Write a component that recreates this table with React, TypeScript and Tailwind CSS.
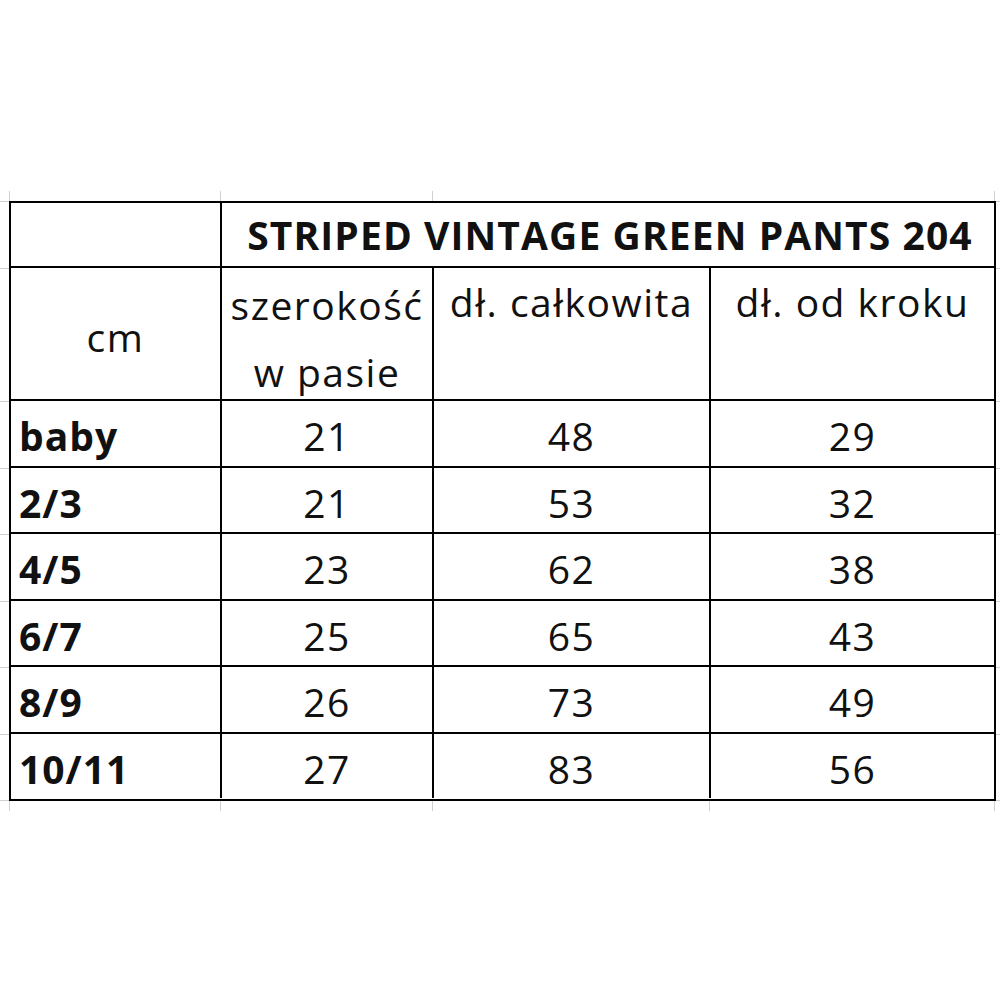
import React from "react";

const rows: [string, string, string, string][] = [
  ["baby", "21", "48", "29"],
  ["2/3", "21", "53", "32"],
  ["4/5", "23", "62", "38"],
  ["6/7", "25", "65", "43"],
  ["8/9", "26", "73", "49"],
  ["10/11", "27", "83", "56"],
];

const rowH = ["h-[67px]", "h-[66px]", "h-[67px]", "h-[66px]", "h-[67px]", "h-[66px]"];

export default function App() {
  const font = { fontFamily: '"Open Sans", "Noto Sans", sans-serif' };
  return (
    <div className="w-[1000px] h-[1000px] bg-white text-[#111]" style={font}>
      <div className="pt-[191px]">
        {/* top gridline stubs */}
        <div className="flex h-[10px]">
          <div className="w-[10px] border-r border-[#d0d0d0]" />
          <div className="w-[211px] border-r border-[#d0d0d0]" />
          <div className="w-[212px] border-r border-[#d0d0d0]" />
          <div className="w-[562px] border-r border-[#d0d0d0]" />
        </div>
        <div className="flex">
          {/* left stubs */}
          <div className="w-[9px] flex flex-col">
            <div className="h-[67px] border-t border-[#d0d0d0]" />
            <div className="h-[133px] border-t border-[#d0d0d0]" />
            {rowH.map((h, i) => (
              <div key={i} className={`${h} border-t border-[#d0d0d0]`} />
            ))}
            <div className="border-t border-[#d0d0d0]" />
          </div>
          {/* table */}
          <div className="w-[987px] border-2 border-black">
            <div className="flex h-[65px] border-b-2 border-black">
              <div className="w-[211px] border-r-2 border-black" />
              <div className="flex-1 flex items-center justify-center font-bold text-[39px] tracking-[1.1px] pl-[4px] pt-[2px]">
                STRIPED VINTAGE GREEN PANTS 204
              </div>
            </div>
            <div className="flex h-[133px] border-b-2 border-black text-[39px] tracking-[1.5px]">
              <div className="w-[211px] border-r-2 border-black flex items-center justify-center pt-[8px]">
                cm
              </div>
              <div className="w-[212px] border-r-2 border-black flex flex-col items-center leading-[67px] pt-[3px]">
                <span>szerokość</span>
                <span>w pasie</span>
              </div>
              <div className="w-[277px] border-r-2 border-black flex justify-center leading-[67px]">
                dł. całkowita
              </div>
              <div className="flex-1 flex justify-center leading-[67px]">
                dł. od kroku
              </div>
            </div>
            {rows.map((r, i) => (
              <div
                key={r[0]}
                className={`flex ${i === 5 ? "h-[64px]" : i % 2 === 0 ? "h-[67px] border-b-2" : "h-[66px] border-b-2"} border-black text-[39px] tracking-[1.5px]`}
              >
                <div className="w-[211px] border-r-2 border-black flex items-center pl-[8px] pt-[6px] font-bold tracking-[1px]">
                  {r[0]}
                </div>
                <div className="w-[212px] border-r-2 border-black flex items-center justify-center pt-[6px]">
                  {r[1]}
                </div>
                <div className="w-[277px] border-r-2 border-black flex items-center justify-center pt-[6px]">
                  {r[2]}
                </div>
                <div className="flex-1 flex items-center justify-center pt-[6px]">
                  {r[3]}
                </div>
              </div>
            ))}
          </div>
          {/* right stubs */}
          <div className="w-[4px] flex flex-col">
            <div className="h-[67px] border-t border-[#d0d0d0]" />
            <div className="h-[133px] border-t border-[#d0d0d0]" />
            {rowH.map((h, i) => (
              <div key={i} className={`${h} border-t border-[#d0d0d0]`} />
            ))}
            <div className="border-t border-[#d0d0d0]" />
          </div>
        </div>
        {/* bottom gridline stubs */}
        <div className="flex h-[10px]">
          <div className="w-[10px] border-r border-[#d0d0d0]" />
          <div className="w-[211px] border-r border-[#d0d0d0]" />
          <div className="w-[212px] border-r border-[#d0d0d0]" />
          <div className="w-[277px] border-r border-[#d0d0d0]" />
          <div className="w-[285px] border-r border-[#d0d0d0]" />
        </div>
      </div>
    </div>
  );
}
